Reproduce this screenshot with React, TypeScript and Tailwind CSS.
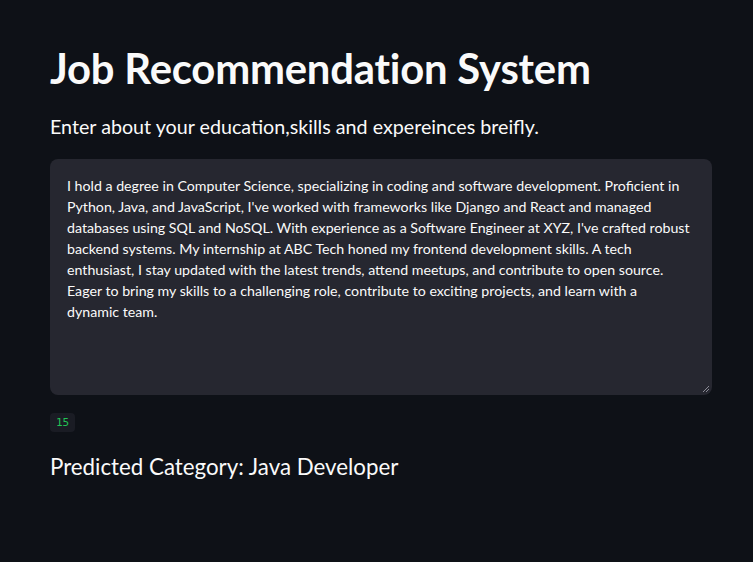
import React from "react";

// line breaks follow the wrap in the screenshot
const essay = [
  "I hold a degree in Computer Science, specializing in coding and software development. Proficient in",
  "Python, Java, and JavaScript, I've worked with frameworks like Django and React and managed",
  "databases using SQL and NoSQL. With experience as a Software Engineer at XYZ, I've crafted robust",
  "backend systems. My internship at ABC Tech honed my frontend development skills. A tech",
  "enthusiast, I stay updated with the latest trends, attend meetups, and contribute to open source.",
  "Eager to bring my skills to a challenging role, contribute to exciting projects, and learn with a",
  "dynamic team.",
].join("\n");

// Streamlit-style job recommender page (dark theme)
const App: React.FC = () => {
  return (
    <div className="min-h-[562px] bg-[#0e1117] text-[#fafafa] font-['Lato','Noto_Sans',sans-serif]">
      <div className="px-[50px] pt-[44px]">
        {/* Title */}
        <h1 className="text-[41.8px] font-bold leading-[48px] tracking-[-0.2px]">
          Job Recommendation System
        </h1>

        {/* Prompt label */}
        <p className="mt-[20px] text-[19.7px] leading-[30px]">
          Enter about your education,skills and expereinces breifly.
        </p>

        {/* Text area */}
        <div className="relative mt-[17px] w-[662px] h-[236px] rounded-lg bg-[#262730]">
          <textarea
            readOnly
            defaultValue={essay}
            className="block w-full h-full resize-none overflow-hidden bg-transparent pl-[17px] pr-[4px] pt-[16px] text-[14.2px] leading-[21px] text-[#fafafa] outline-none"
          />
          <svg
            className="absolute right-[2px] bottom-[2px]"
            width="9"
            height="9"
            viewBox="0 0 9 9"
          >
            <path d="M8 2 L2 8 M8 5 L5 8" stroke="#8a8a95" strokeWidth="1" />
          </svg>
        </div>

        {/* Code badge */}
        <div className="mt-[18px] flex">
          <code className="rounded bg-[#1a1c24] px-[6px] py-[2px] text-[11px] leading-[15px] text-[#21c354] font-['DejaVu_Sans_Mono',monospace]">
            15
          </code>
        </div>

        {/* Result */}
        <p className="mt-[20px] text-[22.3px] leading-[30px]">
          Predicted Category: Java Developer
        </p>
      </div>
    </div>
  );
};

export default App;
